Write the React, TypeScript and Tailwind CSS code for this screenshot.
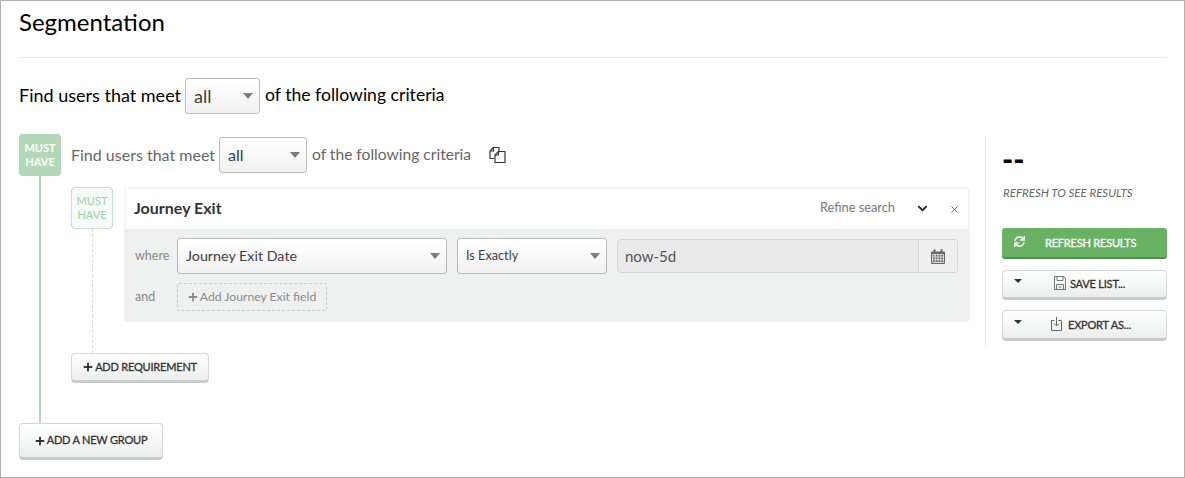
import { FaPlus, FaChevronDown, FaSync } from "react-icons/fa";
import { X } from "lucide-react";
import type { ReactNode } from "react";

function Caret({ className = "border-x-[5px] border-t-[6px] border-t-[#7d7d7d]" }: { className?: string }) {
  return <span className={`h-0 w-0 border-x-transparent ${className}`} />;
}

function Select({ label, className, textClass }: { label: string; className: string; textClass: string }) {
  return (
    <div className={`flex items-center justify-between rounded-[3px] border border-[#bcbcbc] bg-gradient-to-b from-white to-[#f1f1f1] pl-[8px] pr-[6px] text-[#3d3d3d] ${className}`}>
      <span className={textClass}>{label}</span>
      <Caret />
    </div>
  );
}

function GreyButton({ children, className }: { children: ReactNode; className: string }) {
  return (
    <button className={`flex items-center rounded-[4px] border border-[#d4d6d6] border-b-[3px] border-b-[#c6cbcb] bg-gradient-to-b from-white to-[#eceeee] text-[11px] tracking-[-0.2px] text-[#333] [-webkit-text-stroke:0.3px_#333] ${className}`}>
      {children}
    </button>
  );
}

function CopyIcon() {
  return (
    <svg width="17" height="18" viewBox="0 0 17 18" fill="none" stroke="#333" strokeWidth="1.2" strokeLinejoin="round">
      <path d="M5 12.5H1V5L4.5 1.5H10V5.5" />
      <path d="M1 5H4.5V1.5" />
      <path d="M6 9L9.5 5.5H16V16.5H6V9Z" fill="white" />
      <path d="M6 9H9.5V5.5" />
    </svg>
  );
}

function CalendarIcon() {
  return (
    <svg width="14" height="15" viewBox="0 0 14 15" fill="#666">
      <path d="M0 3.5A1 1 0 0 1 1 2.5H13A1 1 0 0 1 14 3.5V14A1 1 0 0 1 13 15H1A1 1 0 0 1 0 14Z" />
      <rect x="2.5" y="0" width="2" height="4" rx="1" />
      <rect x="9.5" y="0" width="2" height="4" rx="1" />
      <path d="M1.5 5.5V13.5H12.5V5.5ZM4 7.5V5.5M1.5 8H12.5M1.5 10.7H12.5M4.2 5.5V13.5M7 5.5V13.5M9.8 5.5V13.5" fill="none" stroke="#efefef" strokeWidth=".8" />
    </svg>
  );
}

function SaveIcon() {
  return (
    <svg width="12" height="14" viewBox="0 0 12 14" fill="none" stroke="#777" strokeWidth="1">
      <path d="M.5.5H9.5L11.5 2.5V13.5H.5Z" />
      <path d="M3 .5V4.5H9V.5" />
      <path d="M2.5 13.5V8.5H9.5V13.5" />
      <path d="M4.5 11H7.5" />
    </svg>
  );
}

function ExportIcon() {
  return (
    <svg width="11" height="14" viewBox="0 0 11 14" fill="none" stroke="#666" strokeWidth="1">
      <path d="M3.5 3.5H.5V13.5H10.5V3.5H7.5" />
      <path d="M5.5 0V8.5M3 6.5L5.5 9L8 6.5" />
    </svg>
  );
}

export default function App() {
  return (
    <div className="h-[478px] w-[1185px] overflow-hidden border border-[#b0b0b0] bg-white pl-[18px] pr-[17px] font-['Lato',sans-serif] text-black">
      {/* Header */}
      <h1 className="h-[57px] border-b border-[#ececec] pt-[5px] text-[24px] leading-[32px]">Segmentation</h1>

      <div className="mt-[20px] flex h-[36px] items-center text-[18px]">
        <span className="pb-[1px]">Find users that meet</span>
        <Select label="all" className="ml-[4px] h-[36px] w-[75px]" textClass="text-[18px]" />
        <span className="ml-[5px] pb-[1px] text-[17.6px]">of the following criteria</span>
      </div>

      <div className="mt-[20px] flex">
        {/* Group column */}
        <div className="flex w-[42px] flex-col items-center">
          <div className="flex h-[42px] w-[42px] items-center justify-center rounded-[4px] bg-[#b2d8b9] text-center text-[11px] leading-[14px] font-bold text-white">
            MUST<br />HAVE
          </div>
          <div className="w-[2px] flex-1 bg-[#b2d8b9]" />
        </div>

        <div className="ml-[10px] flex flex-1 pb-[40px]">
          <div className="w-[914px]">
            <div className="mt-[3px] flex h-[36px] items-center text-[#666]">
              <span className="text-[16px]">Find users that meet</span>
              <Select label="all" className="ml-[4px] h-[36px] w-[88px]" textClass="text-[16px]" />
              <span className="ml-[5px] text-[15.6px]">of the following criteria</span>
              <span className="ml-[18px]"><CopyIcon /></span>
            </div>

            <div className="mt-[14px] flex">
              {/* Requirement column */}
              <div className="flex w-[42px] flex-col items-center">
                <div className="flex h-[42px] w-[42px] items-center justify-center rounded-[4px] border border-[#c3e2c9] bg-[#f5fbf6] text-center text-[11px] leading-[14px] text-[#9fcfa8]">
                  MUST<br />HAVE
                </div>
                <div className="w-0 flex-1 border-l border-dashed border-[#cfe6d4]" />
              </div>

              <div className="ml-[11px] mb-[31px] w-[846px] overflow-hidden rounded-[4px] bg-[#eff1f0]">
                <div className="flex h-[42px] items-center border-x-2 border-t-2 border-[#f3f4f4] bg-white pb-[2px] pl-[8px] pr-[8px]">
                  <span className="text-[16px] font-bold text-[#333]">Journey Exit</span>
                  <span className="ml-auto text-[12.8px] text-[#777]">Refine search</span>
                  <FaChevronDown className="ml-[22px] text-[11px] text-[#222]" />
                  <X className="ml-[21px] mt-[3px] h-[11px] w-[11px] text-[#666]" />
                </div>
                <div className="h-[93px] pl-[11px] pr-[12px] pt-[9px]">
                  <div className="flex h-[36px] items-center">
                    <span className="w-[42px] text-[12.5px] text-[#888]">where</span>
                    <Select label="Journey Exit Date" className="h-[36px] w-[270px]" textClass="text-[14.3px]" />
                    <Select label="Is Exactly" className="ml-[10px] h-[36px] w-[150px]" textClass="text-[12.7px]" />
                    <div className="ml-[10px] flex h-[34px] flex-1 items-center rounded-[4px] border border-[#d6d8d8] bg-[#e9e9e9]">
                      <span className="flex-1 pl-[7px] text-[15px] text-[#555]">now-5d</span>
                      <span className="flex h-full w-[39px] items-center justify-center border-l border-[#d6d8d8] bg-[#efefef]">
                        <CalendarIcon />
                      </span>
                    </div>
                  </div>
                  <div className="mt-[9px] flex h-[28px] items-center">
                    <span className="w-[42px] text-[12.5px] text-[#888]">and</span>
                    <div className="flex h-[28px] w-[150px] items-center justify-center gap-[2px] rounded-[2px] border border-dashed border-[#c9cccc] text-[12.2px] text-[#8a8a8a]">
                      <FaPlus className="text-[10px]" />
                      Add Journey Exit field
                    </div>
                  </div>
                </div>
              </div>
            </div>

            <GreyButton className="h-[30px] w-[138px] justify-center gap-[2px]">
              <FaPlus className="text-[10px] text-[#333]" />
              ADD REQUIREMENT
            </GreyButton>
          </div>

          {/* Results column */}
          <div className="mt-[1px] h-[211px] w-[182px] border-l border-[#ececec] pl-[16px]">
            <div className="mt-[7px] h-[34px] text-[30px] leading-[34px] font-black">--</div>
            <div className="mt-[8px] pl-[1px] text-[11.5px] text-[#666] italic">REFRESH TO SEE RESULTS</div>
            <button className="mt-[27px] flex h-[31px] w-[165px] items-center rounded-[3px] border-b-2 border-b-[#4f8f50] bg-[#69b263] pl-[12px] text-[11px] tracking-[-0.2px] text-white [-webkit-text-stroke:0.3px_#fff]">
              <FaSync className="mb-[3px] text-[11px]" />
              <span className="ml-[20px]">REFRESH RESULTS</span>
            </button>
            <GreyButton className="mt-[11px] h-[30px] w-[165px] pl-[11px]">
              <Caret className="mb-[6px] border-x-[4px] border-t-[4px] border-t-[#333]" />
              <span className="ml-[32px] mb-[2px]"><SaveIcon /></span>
              <span className="ml-[4px]">SAVE LIST...</span>
            </GreyButton>
            <GreyButton className="mt-[10px] h-[31px] w-[165px] pl-[11px]">
              <Caret className="mb-[6px] border-x-[4px] border-t-[4px] border-t-[#333]" />
              <span className="ml-[29px] mb-[2px]"><ExportIcon /></span>
              <span className="ml-[6px]">EXPORT AS...</span>
            </GreyButton>
          </div>
        </div>
      </div>

      <GreyButton className="h-[37px] w-[144px] justify-center gap-[2px]">
        <FaPlus className="text-[10px] text-[#333]" />
        ADD A NEW GROUP
      </GreyButton>
    </div>
  );
}
